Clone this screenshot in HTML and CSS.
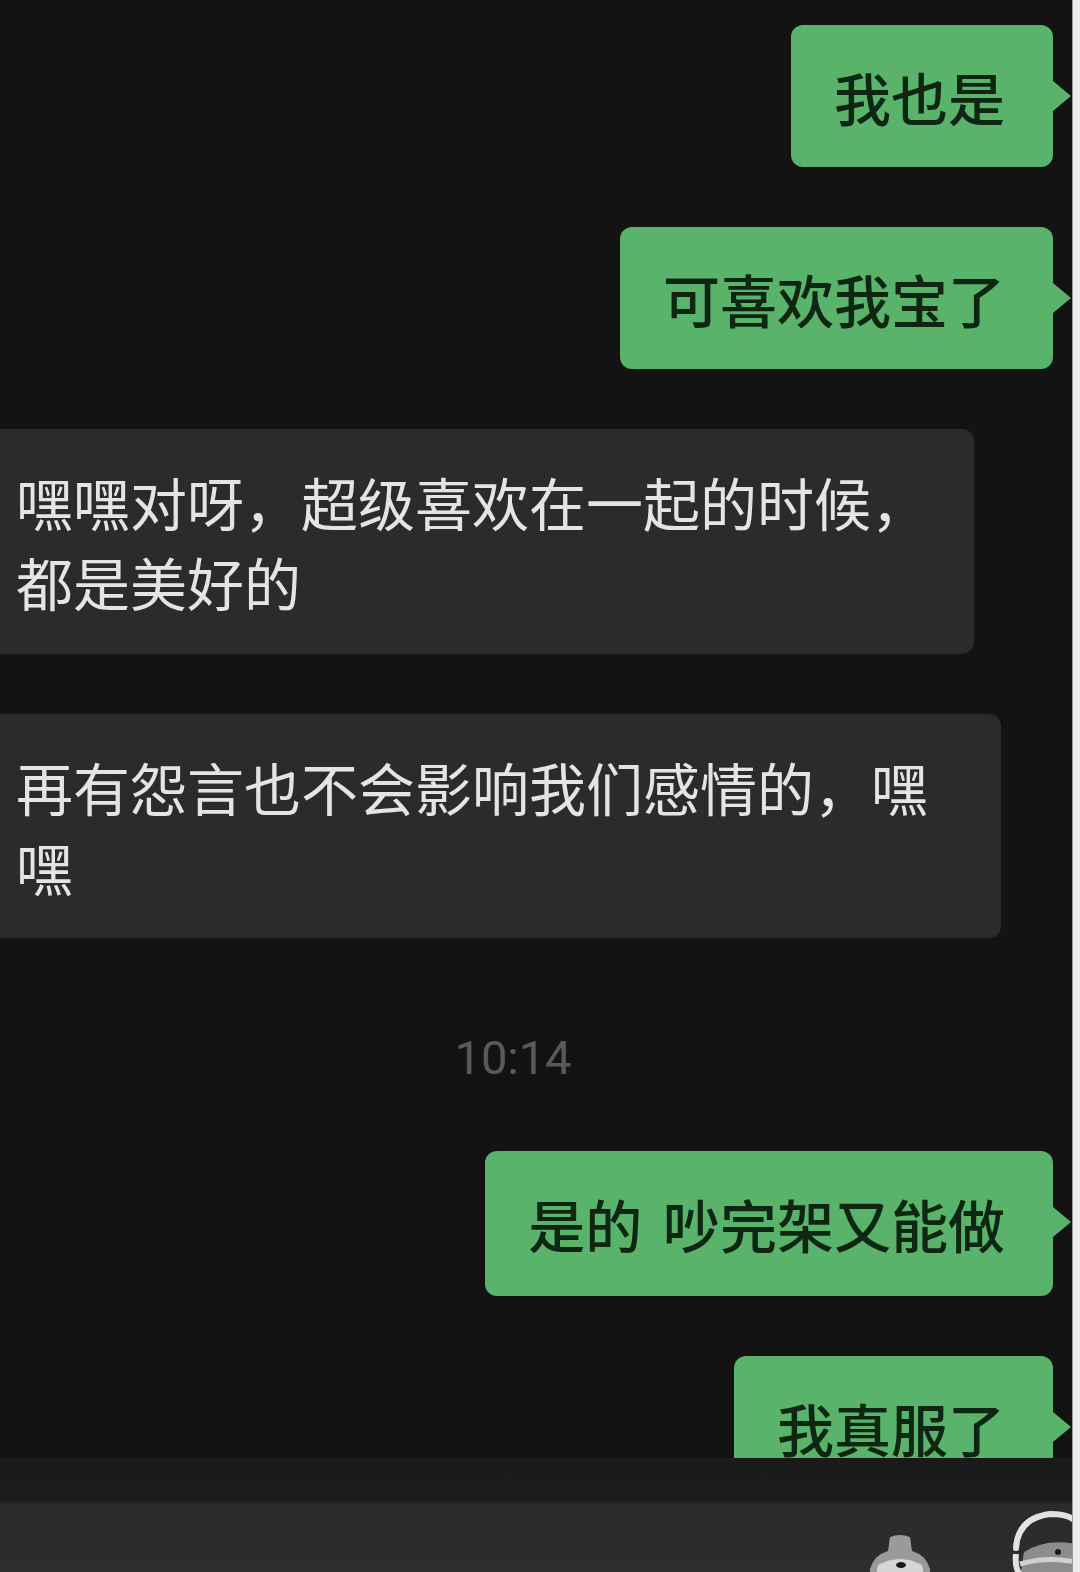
FILE: index.html
```html
<!DOCTYPE html>
<html lang="zh-CN">
<head>
  <meta charset="UTF-8">
  <meta name="viewport" content="width=device-width, initial-scale=1.0">
  <title>聊天记录</title>
  <link rel="stylesheet" href="styles.css">
</head>
<body>

<div class="screen">
  <div class="chat">
    <div class="row me"><div class="bubble green">我也是</div></div>
    <div class="row me"><div class="bubble green">可喜欢我宝了</div></div>
    <div class="row you"><div class="bubble gray b3">嘿嘿对呀，超级喜欢在一起的时候，<br>都是美好的</div></div>
    <div class="row you"><div class="bubble gray b4">再有怨言也不会影响我们感情的，嘿<br>嘿</div></div>
    <div class="time">10:14</div>
    <div class="row me"><div class="bubble green wide">是的 吵完架又能做</div></div>
    <div class="row me"><div class="bubble green">我真服了</div></div>
  </div>

  <div class="inputbar">
    <svg class="icon-a" width="64" height="50" viewBox="0 0 64 50">
      <path d="M22 2 Q32 -2 42 2 L44 16 Q58 20 62 34 L62 50 L2 50 L2 34 Q6 20 20 16 Z" fill="#9a9a9a"/>
      <path d="M10 30 Q32 18 54 30 L58 50 L6 50 Z" fill="#d6d6d6"/>
      <ellipse cx="33" cy="30" rx="5" ry="3" fill="#1a1a1a"/>
    </svg>
    <svg class="icon-b" width="66" height="70" viewBox="0 0 66 70">
      <path d="M6 40 Q8 10 40 6 Q60 6 66 14" fill="none" stroke="#e2e2e2" stroke-width="6" stroke-linecap="round"/>
      <path d="M14 44 Q36 30 66 36 L66 70 L10 70 Z" fill="#8c8c8c"/>
      <path d="M6 46 Q4 64 14 70" fill="none" stroke="#e2e2e2" stroke-width="6"/>
      <path d="M10 56 Q36 48 66 54" fill="none" stroke="#d0d0d0" stroke-width="5"/>
      <circle cx="48" cy="44" r="3" fill="#1a1a1a"/>
    </svg>
  </div>
</div>
<div class="edge"></div>

</body>
</html>
```

FILE: styles.css
```css
body { margin: 0; display: flex; height: 1572px; overflow: hidden; background-color: #131313; font-family: "Noto Sans CJK SC", "Noto Sans", sans-serif; }
.screen { width: 1073px; display: flex; flex-direction: column; }
.edge { width: 7px; background-color: #ececec; border-left: 1px solid #9a9a9a; }

.chat { flex: 1; overflow: hidden; display: flex; flex-direction: column; gap: 60px; padding-top: 25px; }
.row { display: flex; }
.row.me { justify-content: flex-end; padding-right: 19px; }
.row.you { justify-content: flex-start; }

.bubble { position: relative; font-size: 57px; line-height: 80px; white-space: nowrap; }
.green { background-color: #59b36b; color: #0f2613; padding: 31px 48px 31px 43px; border-radius: 12px; font-weight: 500; }
.green::after { content: ""; position: absolute; right: -18px; top: 56px; border-left: 18px solid #59b36b; border-top: 15px solid transparent; border-bottom: 15px solid transparent; }
.green.wide { word-spacing: 8px; padding-top: 32px; padding-bottom: 33px; }
.gray { background-color: #2b2b2b; color: #e4e4e4; padding: 32px 56px 33px 16px; border-radius: 0 12px 12px 0; }
.b3 { padding-right: 46px; }
.b4 { padding-right: 73px; padding-bottom: 32px; }

.time { text-align: center; color: #5a5a5a; font-family: "Roboto", "Liberation Sans", sans-serif; font-size: 47px; line-height: 46px; padding: 37px 46px 10px 0; }

.inputbar { height: 114px; flex-shrink: 0; display: flex; justify-content: flex-end; align-items: flex-start; gap: 78px; overflow: hidden; background: linear-gradient(#1a1a1a 0, #1c1c1c 42px, #2a2a2a 46px, #2d2d2d 100%); }
.icon-a { margin-top: 77px; }
.icon-b { margin-top: 50px; margin-right: -4px; }
```
